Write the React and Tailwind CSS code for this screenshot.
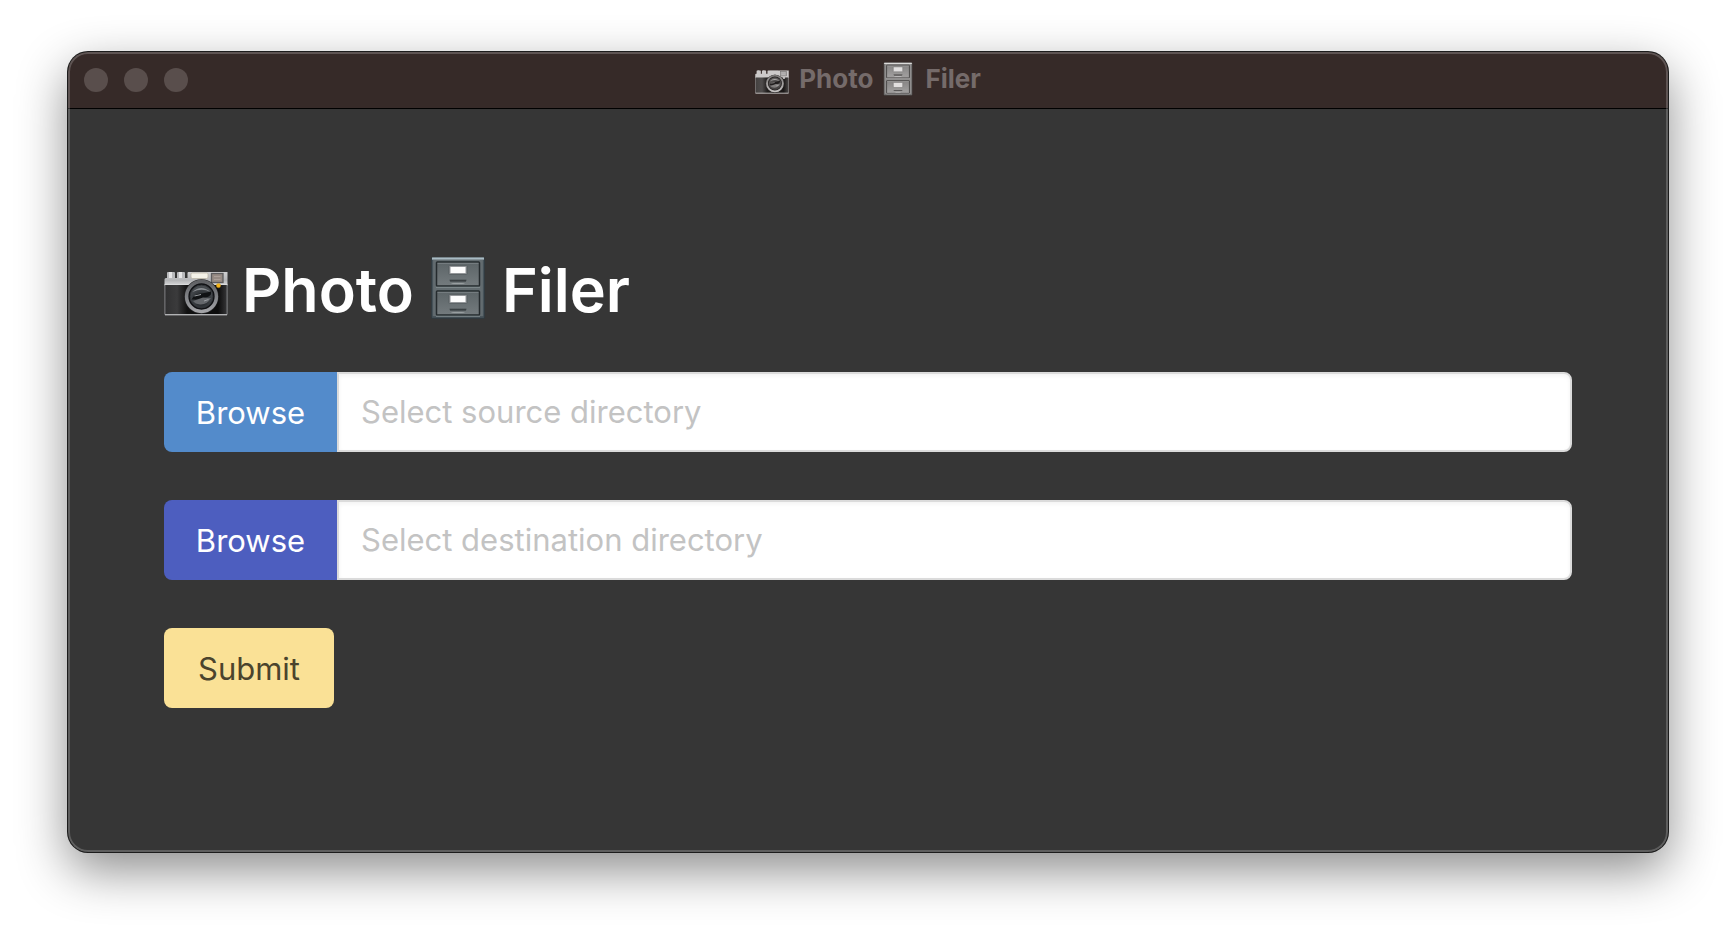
import { useId } from "react";

function CameraIcon({ className }) {
  const id = useId();
  const top = `${id}-top`;
  const body = `${id}-body`;
  const ring = `${id}-ring`;
  const glass = `${id}-glass`;
  return (
    <svg viewBox="0 0 64 64" className={className} aria-hidden="true">
      <defs>
        <linearGradient id={top} x1="0" y1="0" x2="0" y2="1">
          <stop offset="0" stopColor="#d0d0d1" />
          <stop offset="0.6" stopColor="#b4b5b7" />
          <stop offset="1" stopColor="#dcdcdd" />
        </linearGradient>
        <linearGradient id={body} x1="0" y1="0" x2="1" y2="0">
          <stop offset="0" stopColor="#303031" />
          <stop offset="0.2" stopColor="#3b3b3c" />
          <stop offset="0.36" stopColor="#111" />
          <stop offset="0.85" stopColor="#0c0c0c" />
          <stop offset="1" stopColor="#38383a" />
        </linearGradient>
        <linearGradient id={ring} x1="0" y1="0" x2="0" y2="1">
          <stop offset="0" stopColor="#606164" />
          <stop offset="0.5" stopColor="#808286" />
          <stop offset="1" stopColor="#a2a3a6" />
        </linearGradient>
        <radialGradient id={glass} cx="0.5" cy="0.65" r="0.6">
          <stop offset="0" stopColor="#15171a" />
          <stop offset="0.55" stopColor="#34383c" />
          <stop offset="1" stopColor="#4a4e52" />
        </radialGradient>
      </defs>
      <rect x="3" y="16" width="8" height="7" rx="1" fill="#b9babc" />
      <rect x="5" y="16" width="3" height="6" fill="#e6e6e7" />
      <rect x="13" y="16" width="8" height="7" rx="1" fill="#b9babc" />
      <rect x="15" y="16" width="3" height="6" fill="#e6e6e7" />
      <path d="M0.5 30V23.5Q0.5 22 2 22H23.5V17Q23.5 16 24.5 16H63.5V30Z" fill={`url(#${top})`} />
      <rect x="0.5" y="28" width="63" height="31" rx="1" fill={`url(#${body})`} />
      <path d="M0.5 28.5H63.5" stroke="#d9dadb" strokeWidth="1" />
      <path d="M0.9 29V58.6H63.1V29" fill="none" stroke="#8b8c8f" strokeWidth="0.9" />
      <path d="M1 58.8H63" stroke="#c9cacc" strokeWidth="1" />
      <rect x="27" y="17" width="17" height="5.5" rx="1.4" fill="#f4f2e8" stroke="#b8b2a0" strokeWidth="0.7" />
      <rect x="47.5" y="17.5" width="11.5" height="9" fill="#968a83" stroke="#5d5c5d" strokeWidth="1.3" />
      <path d="M50 20.5H56.5M50 23.5H56.5" stroke="#b0a59d" strokeWidth="0.8" />
      <circle cx="37.5" cy="40.5" r="17.2" fill="#29292b" />
      <circle cx="37.5" cy="40.5" r="14.9" fill="#101114" stroke={`url(#${ring})`} strokeWidth="3.5" />
      <circle cx="37.5" cy="40.5" r="11.4" fill={`url(#${glass})`} stroke="#303337" strokeWidth="1" />
      <path d="M28.5 36Q37 28 46.5 36Q38 31.5 28.5 36Z" fill="#8a8e92" />
      <path d="M27.5 43.5Q31 37 38 37.5L47 35.5Q48 40 42 41.5L35 43.5Z" fill="#101214" />
      <path d="M29 45L39 41.5L47 42Q43 49 36 48.5Q31 48 29 45Z" fill="#64676b" />
      <path d="M30.5 40L37 38.5M40 45L44.5 43.5" stroke="#9a9ea2" strokeWidth="1" />
      <circle cx="54.5" cy="29.6" r="2.2" fill="#f5b51b" stroke="#b28322" strokeWidth="0.4" />
    </svg>
  );
}

function CabinetIcon({ className }) {
  const id = useId();
  const face = `${id}-face`;
  const pull = `${id}-pull`;
  return (
    <svg viewBox="0 0 56 64" className={className} aria-hidden="true">
      <defs>
        <linearGradient id={face} x1="0" y1="0" x2="0" y2="1">
          <stop offset="0" stopColor="#5c6467" />
          <stop offset="1" stopColor="#747b7e" />
        </linearGradient>
        <linearGradient id={pull} x1="0" y1="0" x2="0" y2="1">
          <stop offset="0" stopColor="#2b3033" />
          <stop offset="0.5" stopColor="#50575a" />
          <stop offset="1" stopColor="#a9afb1" />
        </linearGradient>
      </defs>
      <rect x="1" y="1" width="54" height="62" rx="1.5" fill="#30393e" />
      <rect x="2" y="1.5" width="52" height="60" rx="1" fill="#636c70" />
      <path d="M2 2.5H54" stroke="#a9bbc4" strokeWidth="1.8" />
      <path d="M2.5 4V61M53.5 4V61" stroke="#465259" strokeWidth="1.2" />
      <path d="M2 61H54" stroke="#414d53" strokeWidth="1.6" />
      {[5.5, 34.5].map((y) => (
        <g key={y} transform={`translate(0 ${y})`}>
          <rect x="6.5" y="0.5" width="43" height="24" rx="0.8" fill={`url(#${face})`} stroke="#252b2e" strokeWidth="1.5" />
          <path d="M7.5 1.8H48.5" stroke="#899194" strokeWidth="0.7" />
          <path d="M6 25.8H50" stroke="#8c9598" strokeWidth="0.8" />
          <rect x="19" y="4" width="18" height="9" rx="0.5" fill="#94979a" stroke="#535b5e" strokeWidth="0.8" />
          <rect x="20.5" y="5.5" width="15" height="6" fill="#fdfdfd" />
          <path d="M19.5 18.2H36.5Q36 22.4 32 22.4H24Q20 22.4 19.5 18.2Z" fill={`url(#${pull})`} />
        </g>
      ))}
    </svg>
  );
}

function DirectoryField({ label, placeholder, buttonClass }) {
  return (
    <div className="flex h-20 w-full">
      <button type="button" className={`w-[173px] shrink-0 rounded-l-lg text-[31px] leading-none text-white ${buttonClass}`}>
        Browse
      </button>
      <input
        type="text"
        aria-label={label}
        placeholder={placeholder}
        className="min-w-0 flex-1 rounded-r-lg border-2 border-[#dbdbdb] bg-white px-[22px] text-[31px] text-[#363636] shadow-[inset_0_2px_4px_rgba(10,10,10,0.05)] outline-none placeholder:text-[#c3c3c3]"
      />
    </div>
  );
}

export default function App() {
  return (
    <div className="min-h-screen bg-white px-[68px] pt-[52px] pb-[84px] font-[Inter,'Liberation_Sans',sans-serif]">
      <div className="relative overflow-hidden rounded-[20px] bg-[#363636] shadow-[0_0_0_1px_#1c1c1c,0_18px_50px_rgba(0,0,0,0.46)] after:pointer-events-none after:absolute after:inset-0 after:rounded-[20px] after:shadow-[inset_0_0_0_2px_rgba(255,255,255,0.2)]">
        <header className="relative grid h-14 grid-cols-[1fr_auto_1fr] items-center bg-[#362a28] px-4 shadow-[0_1px_0_#000]">
          <div className="flex gap-4">
            <button type="button" aria-label="Close" className="size-6 rounded-full bg-[#594e4c]" />
            <button type="button" aria-label="Minimize" className="size-6 rounded-full bg-[#594e4c]" />
            <button type="button" aria-label="Zoom" className="size-6 rounded-full bg-[#594e4c]" />
          </div>
          <div className="flex items-center pb-0.5 text-[26px] leading-8 font-bold text-[#756b6a]">
            <CameraIcon className="mr-2.5 h-[34px] w-[34px] opacity-75 brightness-150 grayscale" />
            <span>Photo</span>
            <CabinetIcon className="mr-3 ml-2.5 h-[34px] w-[30px] opacity-85 brightness-150 grayscale" />
            <span>Filer</span>
          </div>
        </header>
        <main className="px-24 py-36">
          <h1 className="mb-12 flex h-[72px] items-center text-[61px] leading-none font-semibold text-white">
            <CameraIcon className="mr-3.5 size-16 shrink-0" />
            <span className="pt-1">Photo</span>
            <CabinetIcon className="mx-4 h-16 w-14 shrink-0" />
            <span className="pt-1">Filer</span>
          </h1>
          <form className="flex flex-col items-start gap-12" onSubmit={(event) => event.preventDefault()}>
            <DirectoryField
              label="Source directory"
              placeholder="Select source directory"
              buttonClass="bg-[#538bcb]"
            />
            <DirectoryField
              label="Destination directory"
              placeholder="Select destination directory"
              buttonClass="bg-[#4d5ebf]"
            />
            <button type="submit" className="h-20 rounded-lg bg-[#fae196] px-[34px] text-[31px] leading-none text-[#4b442d]">
              Submit
            </button>
          </form>
        </main>
      </div>
    </div>
  );
}
